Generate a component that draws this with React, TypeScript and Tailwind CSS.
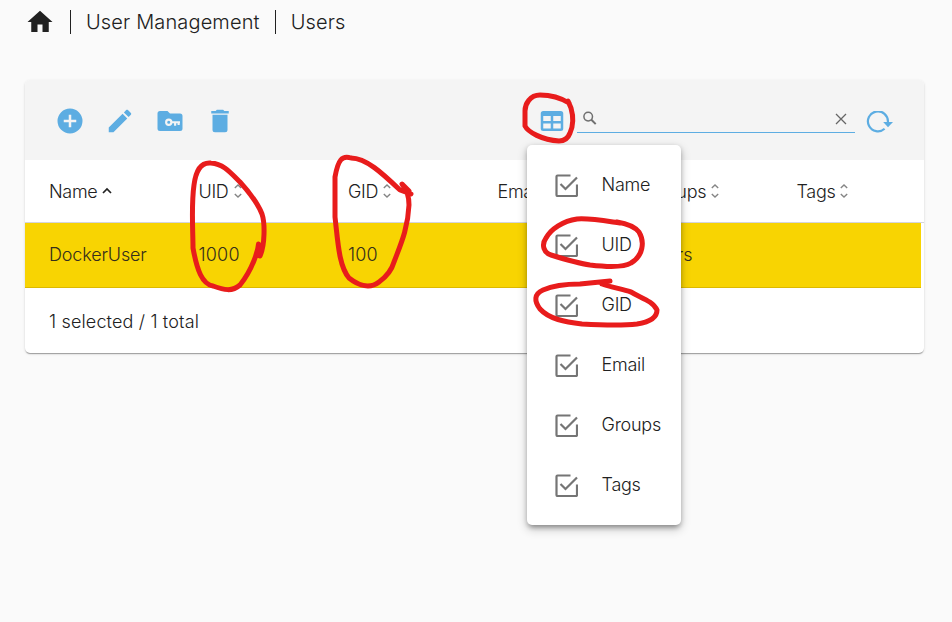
import React from "react";

const ICONS = {
  home: "M10,20V14H14V20H19V12H22L12,3L2,12H5V20H10Z",
  add: "M17,13H13V17H11V13H7V11H11V7H13V11H17M12,2A10,10 0 0,0 2,12A10,10 0 0,0 12,22A10,10 0 0,0 22,12A10,10 0 0,0 12,2Z",
  edit: "M20.71,7.04C21.1,6.65 21.1,6 20.71,5.63L18.37,3.29C18,2.9 17.35,2.9 16.96,3.29L15.12,5.12L18.87,8.87M3,17.25V21H6.75L17.81,9.93L14.06,6.18L3,17.25Z",
  folder: "M10,4L12,6H20A2,2 0 0,1 22,8V18A2,2 0 0,1 20,20H4A2,2 0 0,1 2,18V6A2,2 0 0,1 4,4H10Z",
  trash: "M19,4H15.5L14.5,3H9.5L8.5,4H5V6H19M6,19A2,2 0 0,0 8,21H16A2,2 0 0,0 18,19V7H6V19Z",
  table: "M5,4H19A2,2 0 0,1 21,6V18A2,2 0 0,1 19,20H5A2,2 0 0,1 3,18V6A2,2 0 0,1 5,4M5,8V12H11V8H5M13,8V12H19V8H13M5,14V18H11V14H5M13,14V18H19V14H13Z",
};

function Icon({ d, className = "", children }: { d: string; className?: string; children?: React.ReactNode }) {
  return (
    <svg viewBox="0 0 24 24" className={`size-[30px] shrink-0 fill-current ${className}`}>
      <path d={d} />
      {children}
    </svg>
  );
}

function SortIcon({ active }: { active?: boolean }) {
  return active ? (
    <svg viewBox="0 0 10 8" className="ml-1 mb-px h-2 w-2.5 fill-none stroke-[#222]" strokeWidth="1.7">
      <path d="M1 6L5 2L9 6" />
    </svg>
  ) : (
    <svg viewBox="0 0 8 14" className="ml-[5px] h-3.5 w-2 fill-none stroke-[#858585]" strokeWidth="1.4">
      <path d="M.8 4L4 1L7.2 4M.8 10L4 13L7.2 10" />
    </svg>
  );
}

function CheckIcon() {
  return (
    <svg viewBox="0 0 24 24" className="size-6 shrink-0 fill-none stroke-[#757575]">
      <path d="M16.5 2.5H3.5Q2.5 2.5 2.5 3.5V22Q2.5 23 3.5 23H22Q23 23 23 22V11.5" strokeWidth="2.2" />
      <path d="M6.5 11L11.5 16L23 4.5" strokeWidth="2.2" />
    </svg>
  );
}

const COLUMNS = ["Name", "UID", "GID", "Email", "Groups", "Tags"];
const USER = ["DockerUser", "1000", "100", "", "users", ""];

export default function App() {
  return (
    <div className="relative h-[622px] w-[952px] overflow-hidden bg-[#fafafa] font-['Inter',sans-serif] text-[18px] font-light text-[#212121]">
      <nav className="flex h-11 items-center pl-[25px] text-[20px] tracking-[0.14px]">
        <Icon d={ICONS.home} />
        <span className="ml-[15px] h-6 w-px bg-[#212121]" />
        <span className="ml-[15px]">User Management</span>
        <span className="ml-[15px] h-6 w-px bg-[#212121]" />
        <span className="ml-[15px]">Users</span>
      </nav>

      <section className="ml-[25px] mt-9 w-[899px] rounded-[5px] bg-white shadow-[0_2px_1px_-1px_rgba(0,0,0,.2),0_1px_1px_rgba(0,0,0,.14),0_1px_3px_rgba(0,0,0,.12)]">
        <header className="flex h-20 items-center rounded-t-[5px] bg-[#f4f4f4] pl-[30px] pt-0.5 text-[#5dade2]">
          <div className="flex gap-5">
            <Icon d={ICONS.add} />
            <Icon d={ICONS.edit} />
            <Icon d={ICONS.folder}>
              <g className="fill-none stroke-[#f4f4f4]" strokeWidth="1.7">
                <circle cx="11" cy="13" r="2.1" />
                <path d="M13 13H20M16.1 13V15.8M18.9 13V15.2" />
              </g>
            </Icon>
            <Icon d={ICONS.trash} />
          </div>
          <Icon d={ICONS.table} className="ml-[302px]" />
          <div className="ml-[10px] mb-[5px] flex h-[29px] w-[278px] items-center justify-between border-b border-[#5dade2] pl-[6px] pr-[8px] pb-px">
            <svg viewBox="0 0 14 14" className="size-3.5 fill-none stroke-[#707070]" strokeWidth="1.5">
              <circle cx="5.2" cy="5.6" r="4.3" />
              <path d="M8.4 8.8L12.7 13.1" strokeWidth="2" />
            </svg>
            <svg viewBox="0 0 12 12" className="mt-0.5 size-3 fill-none stroke-[#666]" strokeWidth="1.3">
              <path d="M1 1L11 11M11 1L1 11" />
            </svg>
          </div>
          <svg viewBox="0 0 28 24" className="ml-[11px] mt-[3px] h-6 w-7 fill-none stroke-current">
            <path d="M18.6 17.8A10 10 0 1 1 21.9 11" strokeWidth="2.2" />
            <path d="M17.2 11H27L22 16.2Z" className="fill-current stroke-none" />
          </svg>
        </header>

        <div className="flex h-[63px] items-center border-b border-[#d5d5dc]">
          {COLUMNS.map((name) => (
            <div key={name} className="flex w-[149.5px] items-center pl-6 tracking-[-0.3px]">
              {name}
              <SortIcon active={name === "Name"} />
            </div>
          ))}
        </div>
        <div className="flex h-[65px] w-[896px] items-center border-b border-[#dcb900] bg-[#f8d402] pb-px text-[#352e1b]">
          {USER.map((value, i) => (
            <div key={i} className={`w-[149.5px] shrink-0 pl-6 last:w-[148px] ${i === 1 || i === 2 ? "tracking-[0.2px]" : "tracking-[-0.15px]"}`}>{value}</div>
          ))}
        </div>
        <footer className="flex h-[65px] items-center pl-6 pt-0.5 tracking-[0.15px]">1 selected / 1 total</footer>
      </section>

      <div className="absolute left-[527px] top-[145px] h-[380px] w-[154px] rounded-[5px] bg-white py-2.5 shadow-[0_5px_5px_-3px_rgba(0,0,0,.2),0_4px_10px_1px_rgba(0,0,0,.18),0_2px_5px_rgba(0,0,0,.2)]">
        {COLUMNS.map((name) => (
          <label key={name} className="flex h-[60px] items-center pl-[27px]">
            <CheckIcon />
            <span className="ml-[23.5px] pb-0.5 tracking-[-0.25px]">{name}</span>
          </label>
        ))}
      </div>

      <svg viewBox="0 0 952 622" className="pointer-events-none absolute inset-0 h-[622px] w-[952px] fill-none stroke-[#e81c1c]" strokeWidth="5" strokeLinecap="round" strokeLinejoin="round">
        <path d="M569 103C561 98 550 95 540 95C530 95 525 104 525 111L525 126C528 132 542 140 559 141Q567 141 570 133Q575 122 571 108L568 101" />
        <path d="M240 182C229 171 223 164 211 163C202 162 196 169 194 185C191 206 193 230 193 248C197 270 202 284 213 286C224 290 232 292 240 285C253 269 258 250 258.5 244L260 256C265 245 265 223 262 214C258 204 250 193 240 182" />
        <path d="M411 194L400 190C382 173 366 158 351 158C342 155 338 160 335 177L335 217C338 243 339 266 349 278C359 286 370 289 379 282C386 277 392 269 394 262C400 246 408 229 409 205C409 196 407 191 402 184L409 191" />
        <path d="M620 223C606 221 590 218 577 219C563 221 551 229 546 238C541 245 544 253 551 255C564 259 577 263 590 265C607 267 623 268 631 263C643 256 645 242 639 232C635 227 629 224 617 222" />
        <path d="M610 281L580 284C566 284 552 286 543 290C534 294 534 301 540 309C549 319 565 322 582 324C600 325 620 326 637 324C650 322 657 318 657 310C653 301 641 298 631 292C621 289 611 287 602 284" />
      </svg>
    </div>
  );
}
